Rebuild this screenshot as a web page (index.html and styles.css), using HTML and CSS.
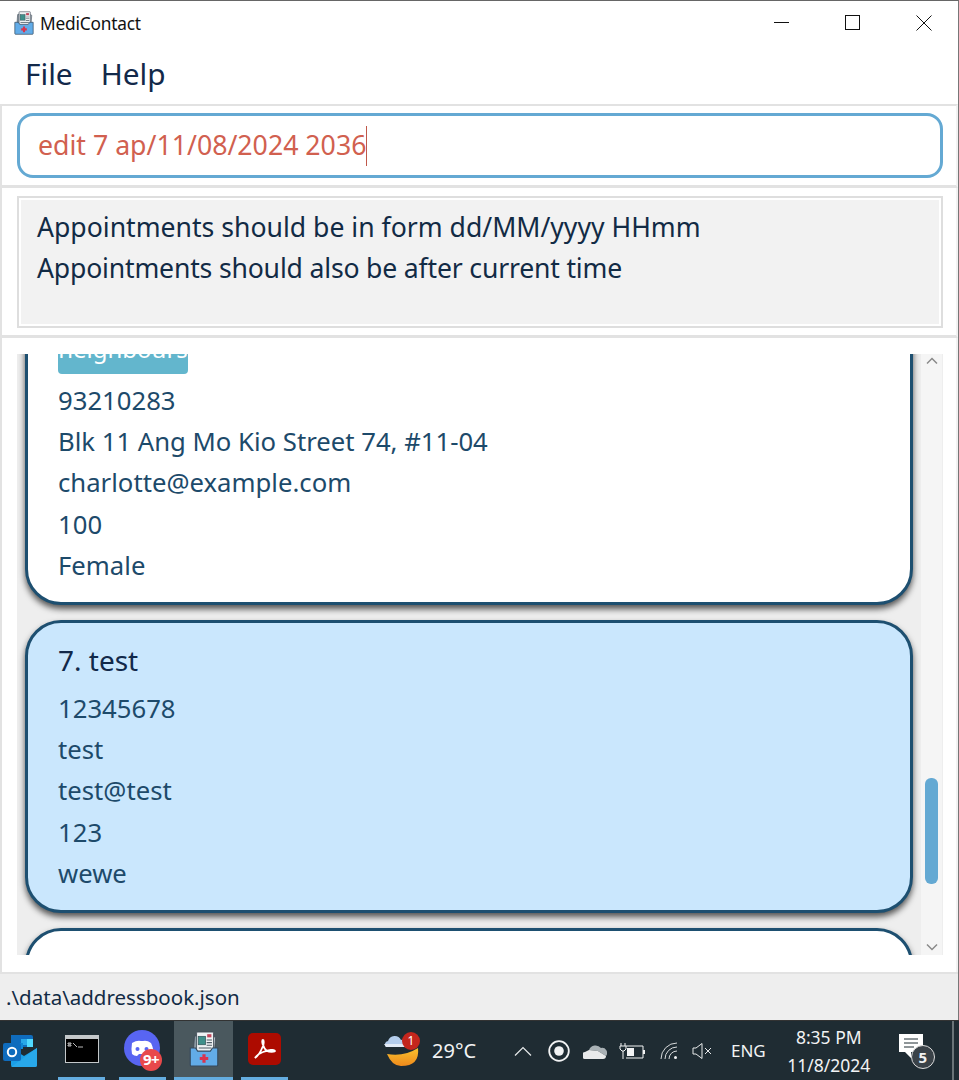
FILE: index.html
```html
<!DOCTYPE html>
<html lang="en">
<head>
    <meta charset="UTF-8">
    <title>MediContact</title>
    <link rel="stylesheet" href="styles.css">
</head>
<body>
    <svg class="defs" width="0" height="0">
        <symbol id="appIcon" viewBox="0 0 28 34">
            <path d="M5 5l6-2 2 6-5 9H4z" fill="#8d9aa3" stroke="#3f4a55" stroke-width=".8"/>
            <path d="M20 4l5 2-1 12h-4z" fill="#b5bec5" stroke="#3f4a55" stroke-width=".8"/>
            <rect x="7" y="1" width="16" height="20" rx="1" fill="#eef1f3" stroke="#3f4a55" stroke-width=".8"/>
            <rect x="8.500" y="5" width="7" height="8" fill="#3f8f8a" stroke="#2f4a50" stroke-width=".6"/>
            <path d="M17 3h4v3h-4z" fill="#c2455b"/>
            <path d="M16.500 8h5v1h-5zM16.500 10.500h5v1h-5zM16.500 13h5v1h-5zM9 15.500h12v1H9z" fill="#4f5c66"/>
            <path d="M1 16h5l2 3h12l2-3h5v16a1 1 0 0 1-1 1H2a1 1 0 0 1-1-1z" fill="#62ace8" stroke="#34495c" stroke-width="1"/>
            <path d="M12.500 22h3v2.500H18v3h-2.500V30h-3v-2.500H10v-3h2.500z" fill="#d8344e"/>
        </symbol>
        <linearGradient id="moonFill" x1="0" y1="0" x2="0" y2="1">
            <stop offset="0" stop-color="#f8c22e"/>
            <stop offset="1" stop-color="#ef8a1c"/>
        </linearGradient>
    </svg>

    <div class="window">
        <div class="titlebar">
            <svg class="title-icon"><use href="#appIcon"/></svg>
            <span class="title-text">MediContact</span>
            <div class="controls">
                <div class="control">
                    <svg width="16" height="16" viewBox="0 0 16 16"><path d="M0 7.500h15" stroke="#111" fill="none"/></svg>
                </div>
                <div class="control">
                    <svg width="16" height="16" viewBox="0 0 16 16"><rect x=".5" y=".5" width="14" height="14" stroke="#111" fill="none"/></svg>
                </div>
                <div class="control">
                    <svg width="16" height="16" viewBox="0 0 16 16"><path d="M.5.5l15 15M15.500.5l-15 15" stroke="#111" fill="none"/></svg>
                </div>
            </div>
        </div>

        <div class="menubar">
            <span class="menu-item">File</span>
            <span class="menu-item">Help</span>
        </div>

        <div class="pane command-pane">
            <div class="command-box">
                <span class="command-text">edit 7 ap/11/08/2024 2036</span><span class="caret"></span>
            </div>
        </div>

        <div class="pane result-pane">
            <div class="result-box">
                <div>Appointments should be in form dd/MM/yyyy HHmm</div>
                <div class="result-second">Appointments should also be after current time</div>
            </div>
        </div>

        <div class="pane list-pane">
            <div class="list">
                <div class="list-view">
                    <div class="list-inner">
                        <div class="card">
                            <div class="card-name">6. Charlotte Oliveiro</div>
                            <div class="tags"><span class="tag">neighbours</span></div>
                            <div class="card-row">93210283</div>
                            <div class="card-row">Blk 11 Ang Mo Kio Street 74, #11-04</div>
                            <div class="card-row">charlotte@example.com</div>
                            <div class="card-row">100</div>
                            <div class="card-row">Female</div>
                        </div>
                        <div class="card selected">
                            <div class="card-name">7. test</div>
                            <div class="card-row">12345678</div>
                            <div class="card-row">test</div>
                            <div class="card-row">test@test</div>
                            <div class="card-row">123</div>
                            <div class="card-row">wewe</div>
                        </div>
                        <div class="card next-card"></div>
                    </div>
                </div>
                <div class="scrollbar">
                    <svg class="arrow" width="12" height="8" viewBox="0 0 12 8"><path d="M1 6.500l5-5 5 5" stroke="#8a8a8a" stroke-width="1.500" fill="none"/></svg>
                    <div class="thumb"></div>
                    <svg class="arrow arrow-down" width="12" height="8" viewBox="0 0 12 8"><path d="M1 1.500l5 5 5-5" stroke="#8a8a8a" stroke-width="1.500" fill="none"/></svg>
                </div>
            </div>
        </div>

        <div class="statusbar">.\data\addressbook.json</div>
    </div>

    <div class="taskbar">
        <div class="task task-outlook">
            <svg width="36" height="34" viewBox="0 0 36 34">
                <path d="M10 1h20a2 2 0 0 1 2 2v10H10z" fill="#0f6cbd"/>
                <rect x="20" y="5" width="6" height="6" fill="#28a8ea"/>
                <rect x="26" y="5" width="6" height="8" fill="#50d9ff"/>
                <rect x="14" y="9" width="8" height="6" fill="#0f8ad8"/>
                <path d="M10 14l13 8 13-8v17a2 2 0 0 1-2 2H12a2 2 0 0 1-2-2z" fill="#1a9fe8"/>
                <path d="M10 33l26-19v17a2 2 0 0 1-2 2z" fill="#28a8ea"/>
                <rect x="2" y="9" width="18" height="18" rx="2" fill="#0f6cbd"/>
                <circle cx="11" cy="18" r="4.200" fill="none" stroke="#fff" stroke-width="2"/>
            </svg>
        </div>
        <div class="task task-open">
            <svg width="34" height="28" viewBox="0 0 34 28">
                <rect x=".5" y=".5" width="33" height="27" fill="#000" stroke="#c4c8ca"/>
                <rect x="1" y="1" width="32" height="3" fill="#c4c8ca"/>
                <path d="M3 8h3v1H3zm0 2h3v1H3zm5-2l4 4M13 12h5" stroke="#bbb" fill="none"/>
            </svg>
        </div>
        <div class="task task-open">
            <svg width="38" height="38" viewBox="0 0 38 38">
                <circle cx="18" cy="18" r="18" fill="#5865f2"/>
                <path d="M8 13q5-3 9-2h2q4-1 8 2 3 6 2 11-3 2-5 2l-2-2h-7l-2 2q-3 0-5-2-1-5 0-11z" fill="#fff"/>
                <circle cx="13.500" cy="19" r="2" fill="#5865f2"/>
                <circle cx="22.500" cy="19" r="2" fill="#5865f2"/>
            </svg>
            <span class="discord-badge">9+</span>
        </div>
        <div class="task task-active">
            <svg class="task-app"><use href="#appIcon"/></svg>
        </div>
        <div class="task task-open">
            <svg width="33" height="32" viewBox="0 0 33 32">
                <rect width="33" height="32" rx="5" fill="#ad0b00"/>
                <path d="M7 25c3-2 6-7 8-12 1-3 1-6 0-6-2 0 0 8 4 11 2 1 8 1 8 0 0-2-7-1-12 1-3 1-6 3-8 6z" fill="none" stroke="#fff" stroke-width="1.800"/>
            </svg>
        </div>

        <div class="weather">
            <svg width="36" height="36" viewBox="0 0 36 36">
                <path d="M3 21q17 3 31-6q2 18-17 18q-9 0-14-12z" fill="url(#moonFill)"/>
                <path d="M2 14a3.500 3.500 0 0 1 2-6 7 7 0 0 1 13-1 4 4 0 0 1 5 6z" fill="#b4cdec"/>
                <path d="M0 11h23l-1 3H2z" fill="#e2ebf6"/>
            </svg>
            <span class="weather-badge">1</span>
        </div>
        <span class="temp">29°C</span>

        <div class="tray">
            <svg class="tray-chevron" width="18" height="10" viewBox="0 0 18 10"><path d="M1 9.500l8-8 8 8" stroke="#e8eaeb" stroke-width="1.200" fill="none"/></svg>
            <svg class="tray-record" width="22" height="22" viewBox="0 0 22 22"><circle cx="11" cy="11" r="9.800" fill="none" stroke="#f2f3f4" stroke-width="1.800"/><circle cx="11" cy="11" r="4.800" fill="#f2f3f4"/></svg>
            <svg class="tray-cloud" width="24" height="16" viewBox="0 0 24 16"><path d="M6 7a7 7 0 0 1 12-2 5 5 0 0 1 5 8l-8-5z" fill="#a9b1b5"/><path d="M3 16a3.500 3.500 0 0 1-1-7l4-2 9 1 8 5q0 3-3 3z" fill="#e8eaeb"/></svg>
            <svg class="tray-battery" width="26" height="18" viewBox="0 0 26 18"><path d="M7 4h17v12H7" fill="none" stroke="#f2f3f4"/><rect x="24" y="8" width="2" height="4" fill="#f2f3f4"/><rect x="8" y="6" width="7" height="8" fill="#f2f3f4"/><path d="M2 1v3M6 1v3M1 4h6v3l-2 2H3L1 7zM4 9v8" fill="none" stroke="#f2f3f4"/></svg>
            <svg class="tray-wifi" width="18" height="18" viewBox="0 0 18 18"><path d="M1 17a16 16 0 0 1 16-16M5 17a12 12 0 0 1 12-12M9 17a8 8 0 0 1 8-8" fill="none" stroke="#d7dadb"/><circle cx="15.500" cy="15.500" r="1.500" fill="#f2f3f4"/></svg>
            <svg class="tray-sound" width="21" height="16" viewBox="0 0 21 16"><path d="M1 5h3l6-4.500v15L4 11H1z" fill="none" stroke="#e8eaeb"/><path d="M13 5l6 6M19 5l-6 6" stroke="#e8eaeb"/></svg>
            <span class="lang">ENG</span>
            <div class="clock">
                <div>8:35 PM</div>
                <div>11/8/2024</div>
            </div>
            <div class="notify">
                <svg width="26" height="26" viewBox="0 0 26 26"><path d="M1 1h24v18H13v6l-6-6H1z" fill="#fff"/><path d="M6 6h14M6 10h14M6 14h10" stroke="#1f2c33"/></svg>
                <span class="notify-count">5</span>
            </div>
        </div>
        <div class="show-desktop"></div>
    </div>
</body>
</html>
```

FILE: styles.css
```css
* {
    box-sizing: border-box;
}

body {
    margin: 0;
    width: 959px;
    height: 1080px;
    overflow: hidden;
    font-family: "Noto Sans", "Open Sans", sans-serif;
    color: #12294a;
    background: #fff;
}

.defs {
    position: absolute;
}

.window {
    height: 1020px;
    display: flex;
    flex-direction: column;
    border-top: 1px solid #666;
    border-right: 1px solid #777;
    background: #fff;
}

/* title bar */
.titlebar {
    height: 44px;
    display: flex;
    align-items: center;
    padding-left: 14px;
}

.title-icon {
    width: 20px;
    height: 24px;
}

.title-text {
    margin-left: 6px;
    font-size: 17.300px;
    letter-spacing: -0.2px;
    color: #111;
}

.controls {
    margin-left: auto;
    margin-right: -1px;
    display: flex;
}

.control {
    width: 71px;
    height: 44px;
    display: flex;
    align-items: center;
    justify-content: center;
}

.menubar {
    height: 59px;
    display: flex;
    align-items: center;
    padding: 0 0 2px 25px;
    gap: 28px;
    font-size: 29.800px;
}

/* panes */
.pane {
    border: 2px solid #e2e2e2;
    border-right-color: #f2f2f2;
}

.command-pane {
    height: 84px;
    padding: 7px 14px 0 15px;
    border-bottom-width: 3px;
}

.command-box {
    height: 65px;
    width: 926px;
    border: 3px solid #64a9d3;
    border-radius: 16px;
    padding: 0 0 3px 18px;
    display: flex;
    align-items: center;
    font-size: 26.700px;
    color: #d1604f;
}

.caret {
    width: 1px;
    height: 40px;
    margin-top: 3px;
    background: #c0584a;
}

.result-pane {
    height: 150px;
    padding: 8px 14px 0 15px;
    border-top: 0;
    border-bottom-width: 3px;
}

.result-box {
    height: 132px;
    width: 926px;
    border: 2px solid #dedede;
    box-shadow: inset 0 0 0 2px #fff;
    background: #f2f2f2;
    padding: 9px 0 0 18px;
    font-size: 26.600px;
    line-height: 41px;
    color: #122b45;
}

.result-second {
    letter-spacing: -0.18px;
}

.list-pane {
    height: 634px;
    padding: 16px 14px 0 15px;
    border-top: 0;
    border-bottom: 0;
}

.list {
    height: 601px;
    width: 926px;
    display: flex;
    background: #eee;
}

.list-view {
    width: 904px;
    padding: 0 8px;
    overflow: hidden;
}

.list-inner {
    margin-top: -86px;
    display: flex;
    flex-direction: column;
    gap: 15px;
}

/* person cards */
.card {
    border: 3px solid #1d4f70;
    border-radius: 36px;
    background: #fff;
    padding: 19px 0 16px 30px;
    box-shadow: 0 4px 6px rgba(0, 0, 0, 0.65);
}

.selected {
    background: #cae7fd;
}

.next-card {
    height: 120px;
}

.card-name {
    height: 36px;
    line-height: 36px;
    margin-bottom: 10px;
    font-size: 28px;
    color: #12294a;
}

.tags {
    margin: 1px 0 6px;
}

.tag {
    display: block;
    width: 130px;
    height: 38px;
    line-height: 26px;
    border-radius: 4px;
    background: #63b6cd;
    color: #fff;
    font-size: 24px;
    text-align: center;
}

.card-row {
    height: 41.2px;
    line-height: 41.2px;
    font-size: 25.700px;
    color: #1d4a6a;
}

/* scrollbar */
.scrollbar {
    width: 21px;
    background: #f5f5f5;
    display: flex;
    flex-direction: column;
    align-items: center;
    padding-top: 3px;
}

.thumb {
    width: 13px;
    height: 106px;
    margin-top: 413px;
    border-radius: 6px;
    background: #64a9d3;
}

.arrow-down {
    margin-top: 59px;
}

.statusbar {
    height: 48px;
    border-top: 2px solid #e2e2e2;
    background: #eee;
    padding-left: 6px;
    line-height: 46px;
    font-size: 20.500px;
    color: #122b45;
}

/* windows taskbar */
.taskbar {
    height: 60px;
    display: flex;
    align-items: center;
    background: #1f2c33;
    border-top: 1px solid #333;
    color: #f2f3f4;
}

.task {
    position: relative;
    height: 59px;
    width: 47px;
    display: flex;
    align-items: center;
    justify-content: center;
}

.task-outlook {
    width: 38px;
    margin-right: 20px;
}

.task-open {
    border-bottom: 3px solid #64ade0;
    margin-right: 14px;
}

.task-open:nth-child(3) {
    margin-right: 8px;
}

.task-active {
    width: 59px;
    margin-right: 8px;
    background: #4a585e;
    border-bottom: 3px solid #64ade0;
}

.task-app {
    width: 30px;
    height: 36px;
}

.discord-badge {
    position: absolute;
    left: 21px;
    top: 28px;
    width: 22px;
    height: 22px;
    border-radius: 50%;
    background: #e8494b;
    color: #fff;
    font-size: 15px;
    font-weight: 700;
    line-height: 21px;
    text-align: center;
    letter-spacing: -0.5px;
}

.weather {
    position: relative;
    margin-left: 82px;
    width: 36px;
    height: 36px;
}

.weather-badge {
    position: absolute;
    left: 18px;
    top: -1px;
    width: 18px;
    height: 18px;
    border-radius: 50%;
    background: #c4261d;
    color: #fff;
    font-size: 12px;
    line-height: 18px;
    text-align: center;
}

.temp {
    margin-left: 12px;
    width: 82px;
    font-size: 20px;
}

.tray {
    display: flex;
    align-items: center;
}

.tray-record {
    margin-left: 16px;
}

.tray-cloud {
    margin-left: 13px;
}

.tray-battery {
    margin-left: 12px;
}

.tray-wifi {
    margin-left: 15px;
}

.tray-sound {
    margin-left: 14px;
}

.lang {
    margin-left: 18px;
    font-size: 17px;
}

.clock {
    margin-left: 20px;
    width: 86px;
    text-align: center;
    font-size: 17.500px;
    line-height: 28px;
}

.notify {
    position: relative;
    margin-left: 26px;
    width: 36px;
    height: 36px;
}

.notify-count {
    position: absolute;
    left: 13px;
    top: 12px;
    width: 24px;
    height: 24px;
    border-radius: 50%;
    background: #3a4248;
    border: 1px solid #ddd;
    font-size: 15px;
    font-weight: 700;
    line-height: 22px;
    text-align: center;
}

.show-desktop {
    margin-left: auto;
    width: 7px;
    height: 59px;
    border-left: 2px solid #6a7478;
}
```
